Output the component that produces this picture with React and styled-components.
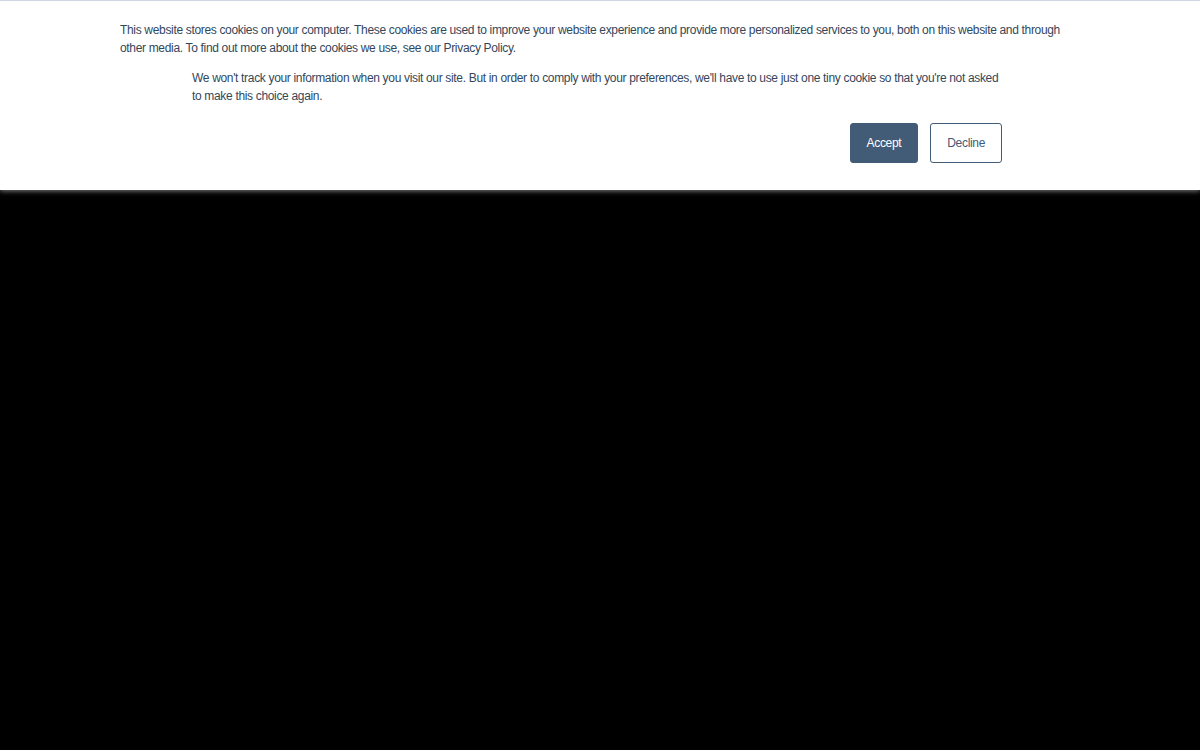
import React from "react";
import styled, { createGlobalStyle } from "styled-components";

const GlobalStyle = createGlobalStyle`
  html, body {
    margin: 0;
    padding: 0;
    background: #000;
    height: 100%;
  }
  body {
    font-family: "Liberation Sans", Arial, sans-serif;
  }
`;

const Banner = styled.div`
  background: #fff;
  border-top: 1px solid #cbd6e2;
  box-shadow: 0 1px 5px 0 rgba(255, 255, 255, 0.5);
  height: 190px;
  box-sizing: border-box;
`;

const Inner = styled.div`
  max-width: 960px;
  margin: 0 auto;
  padding-top: 20px;
  color: #33475b;
  font-size: 12px;
  line-height: 18px;
  letter-spacing: -0.33px;
`;

const Text = styled.p`
  margin: 0 ${(p) => (p.$indent ? "72px" : "0")} 12px;
`;

const Actions = styled.div`
  display: flex;
  justify-content: flex-end;
  gap: 12px;
  margin: 18px 78px 0 0;
`;

const Button = styled.button`
  font-family: inherit;
  font-size: 12px;
  letter-spacing: -0.33px;
  height: 40px;
  padding: 0 16px;
  border-radius: 3px;
  border: 1px solid #425b76;
  background: ${(p) => (p.$primary ? "#425b76" : "#fff")};
  color: ${(p) => (p.$primary ? "#fff" : "#425b76")};
  cursor: pointer;
`;

export default function App() {
  return (
    <>
      <GlobalStyle />
      <Banner>
        <Inner>
          <Text>
            This website stores cookies on your computer. These cookies are used to improve your website
            experience and provide more personalized services to you, both on this website and through other
            media. To find out more about the cookies we use, see our Privacy Policy.
          </Text>
          <Text $indent>
            We won't track your information when you visit our site. But in order to comply with your
            preferences, we'll have to use just one tiny cookie so that you're not asked to make this choice
            again.
          </Text>
          <Actions>
            <Button $primary>Accept</Button>
            <Button>Decline</Button>
          </Actions>
        </Inner>
      </Banner>
    </>
  );
}
